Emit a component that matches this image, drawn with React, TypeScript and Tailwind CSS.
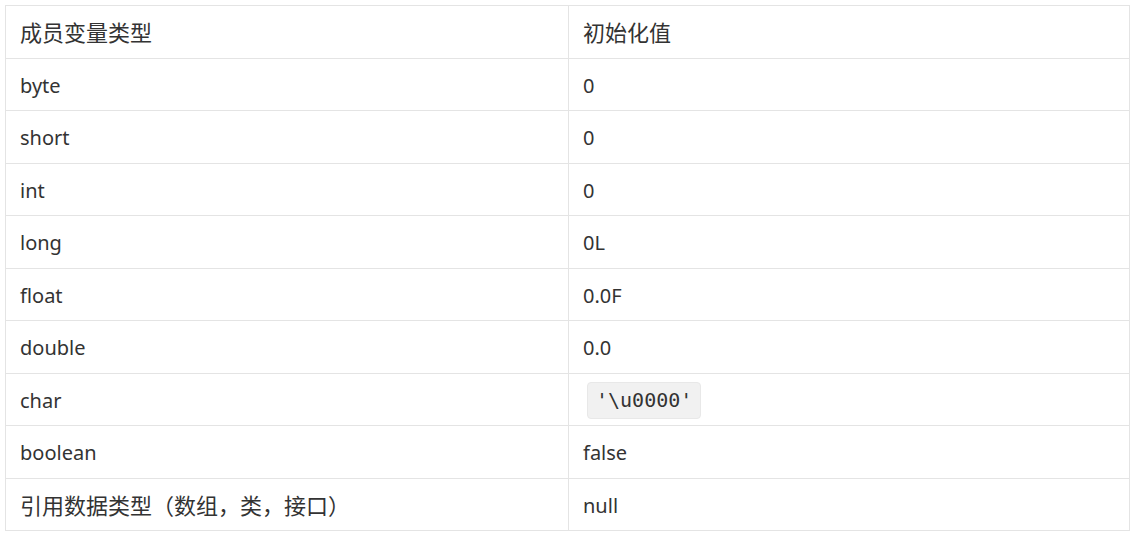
import React from "react";

const Zh = ({ children }: { children: React.ReactNode }) => (
  <span className="text-[22px] leading-[30px]">{children}</span>
);

const rows: [React.ReactNode, React.ReactNode][] = [
  ["byte", "0"],
  ["short", "0"],
  ["int", "0"],
  ["long", "0L"],
  ["float", "0.0F"],
  ["double", "0.0"],
  [
    "char",
    <code className="ml-[4px] inline-block rounded-[4px] border border-[#e8e8e8] bg-[#f1f1f1] px-[8px] py-[3px] font-['DejaVu_Sans_Mono',monospace] text-[20px] leading-[29px] text-[#333]">
      '\u0000'
    </code>,
  ],
  ["boolean", "false"],
  [<Zh>引用数据类型（数组，类，接口）</Zh>, "null"],
];

export default function App() {
  return (
    <div className="min-h-[540px] w-[1134px] bg-white pl-[5px] pt-[5px] font-['Noto_Sans','Noto_Sans_CJK_SC',sans-serif] text-[20px] leading-[30px] text-[#333]">
      <table className="w-[1125px] table-fixed border-collapse">
        <colgroup>
          <col className="w-[563px]" />
          <col />
        </colgroup>
        <tbody>
          <tr className="h-[53px]">
            <td className="border border-[#e4e4e4] px-[14px] pt-[2px] align-middle">
              <Zh>成员变量类型</Zh>
            </td>
            <td className="border border-[#e4e4e4] px-[14px] pt-[2px] align-middle">
              <Zh>初始化值</Zh>
            </td>
          </tr>
          {rows.map(([a, b], i) => (
            <tr key={i} className={i % 2 === 0 ? "h-[52px]" : "h-[53px]"}>
              <td className="border border-[#e4e4e4] px-[14px] pt-[2px] align-middle">{a}</td>
              <td className="border border-[#e4e4e4] px-[14px] pt-[2px] align-middle">{b}</td>
            </tr>
          ))}
        </tbody>
      </table>
    </div>
  );
}
